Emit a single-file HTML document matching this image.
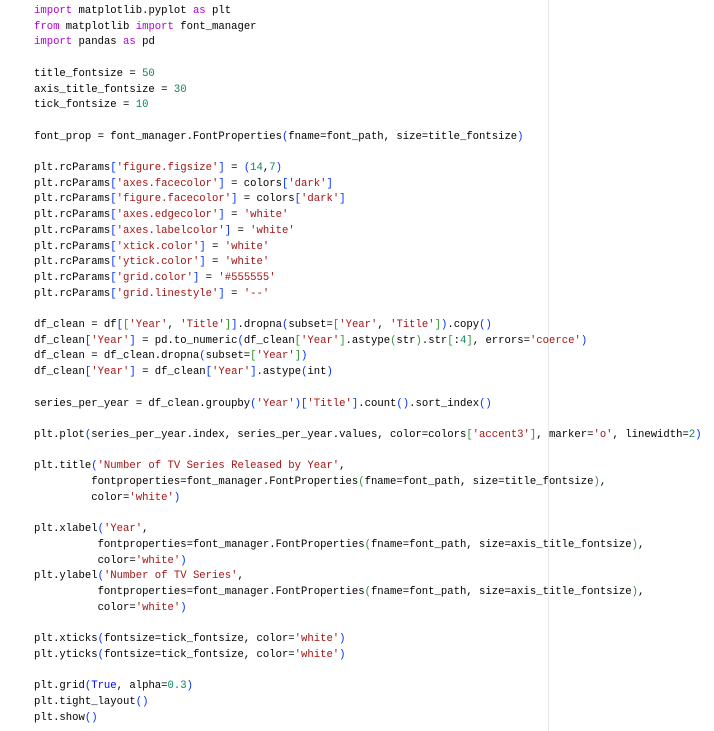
<!DOCTYPE html><html><head><style>
body{margin:0;background:#fff;width:714px;height:731px;overflow:hidden;position:relative}
pre{margin:0;position:absolute;left:34px;top:4px;font-family:"Liberation Mono",monospace;font-size:10.6px;line-height:15.7px;color:#000}
.k{color:#af00db}.n{color:#098658}.s{color:#a31515}.a{color:#0431fa}.b{color:#319331}.c{color:#7b3814}.t{color:#0000ff}
.r{position:absolute;left:548px;top:0;width:1px;height:731px;background:#e5e5e5}
</style></head><body><div class="r"></div><pre><span class="k">import</span> matplotlib.pyplot <span class="k">as</span> plt
<span class="k">from</span> matplotlib <span class="k">import</span> font_manager
<span class="k">import</span> pandas <span class="k">as</span> pd

title_fontsize = <span class="n">50</span>
axis_title_fontsize = <span class="n">30</span>
tick_fontsize = <span class="n">10</span>

font_prop = font_manager.FontProperties<span class="a">(</span>fname=font_path, size=title_fontsize<span class="a">)</span>

plt.rcParams<span class="a">[</span><span class="s">'figure.figsize'</span><span class="a">]</span> = <span class="a">(</span><span class="n">14</span>,<span class="n">7</span><span class="a">)</span>
plt.rcParams<span class="a">[</span><span class="s">'axes.facecolor'</span><span class="a">]</span> = colors<span class="a">[</span><span class="s">'dark'</span><span class="a">]</span>
plt.rcParams<span class="a">[</span><span class="s">'figure.facecolor'</span><span class="a">]</span> = colors<span class="a">[</span><span class="s">'dark'</span><span class="a">]</span>
plt.rcParams<span class="a">[</span><span class="s">'axes.edgecolor'</span><span class="a">]</span> = <span class="s">'white'</span>
plt.rcParams<span class="a">[</span><span class="s">'axes.labelcolor'</span><span class="a">]</span> = <span class="s">'white'</span>
plt.rcParams<span class="a">[</span><span class="s">'xtick.color'</span><span class="a">]</span> = <span class="s">'white'</span>
plt.rcParams<span class="a">[</span><span class="s">'ytick.color'</span><span class="a">]</span> = <span class="s">'white'</span>
plt.rcParams<span class="a">[</span><span class="s">'grid.color'</span><span class="a">]</span> = <span class="s">'#555555'</span>
plt.rcParams<span class="a">[</span><span class="s">'grid.linestyle'</span><span class="a">]</span> = <span class="s">'--'</span>

df_clean = df<span class="a">[</span><span class="b">[</span><span class="s">'Year'</span>, <span class="s">'Title'</span><span class="b">]</span><span class="a">]</span>.dropna<span class="a">(</span>subset=<span class="b">[</span><span class="s">'Year'</span>, <span class="s">'Title'</span><span class="b">]</span><span class="a">)</span>.copy<span class="a">()</span>
df_clean<span class="a">[</span><span class="s">'Year'</span><span class="a">]</span> = pd.to_numeric<span class="a">(</span>df_clean<span class="b">[</span><span class="s">'Year'</span><span class="b">]</span>.astype<span class="b">(</span>str<span class="b">)</span>.str<span class="b">[</span>:<span class="n">4</span><span class="b">]</span>, errors=<span class="s">'coerce'</span><span class="a">)</span>
df_clean = df_clean.dropna<span class="a">(</span>subset=<span class="b">[</span><span class="s">'Year'</span><span class="b">]</span><span class="a">)</span>
df_clean<span class="a">[</span><span class="s">'Year'</span><span class="a">]</span> = df_clean<span class="a">[</span><span class="s">'Year'</span><span class="a">]</span>.astype<span class="a">(</span>int<span class="a">)</span>

series_per_year = df_clean.groupby<span class="a">(</span><span class="s">'Year'</span><span class="a">)</span><span class="a">[</span><span class="s">'Title'</span><span class="a">]</span>.count<span class="a">()</span>.sort_index<span class="a">()</span>

plt.plot<span class="a">(</span>series_per_year.index, series_per_year.values, color=colors<span class="b">[</span><span class="s">'accent3'</span><span class="b">]</span>, marker=<span class="s">'o'</span>, linewidth=<span class="n">2</span><span class="a">)</span>

plt.title<span class="a">(</span><span class="s">'Number of TV Series Released by Year'</span>,
         fontproperties=font_manager.FontProperties<span class="b">(</span>fname=font_path, size=title_fontsize<span class="b">)</span>,
         color=<span class="s">'white'</span><span class="a">)</span>

plt.xlabel<span class="a">(</span><span class="s">'Year'</span>,
          fontproperties=font_manager.FontProperties<span class="b">(</span>fname=font_path, size=axis_title_fontsize<span class="b">)</span>,
          color=<span class="s">'white'</span><span class="a">)</span>
plt.ylabel<span class="a">(</span><span class="s">'Number of TV Series'</span>,
          fontproperties=font_manager.FontProperties<span class="b">(</span>fname=font_path, size=axis_title_fontsize<span class="b">)</span>,
          color=<span class="s">'white'</span><span class="a">)</span>

plt.xticks<span class="a">(</span>fontsize=tick_fontsize, color=<span class="s">'white'</span><span class="a">)</span>
plt.yticks<span class="a">(</span>fontsize=tick_fontsize, color=<span class="s">'white'</span><span class="a">)</span>

plt.grid<span class="a">(</span><span class="t">True</span>, alpha=<span class="n">0.3</span><span class="a">)</span>
plt.tight_layout<span class="a">()</span>
plt.show<span class="a">()</span></pre></body></html>
